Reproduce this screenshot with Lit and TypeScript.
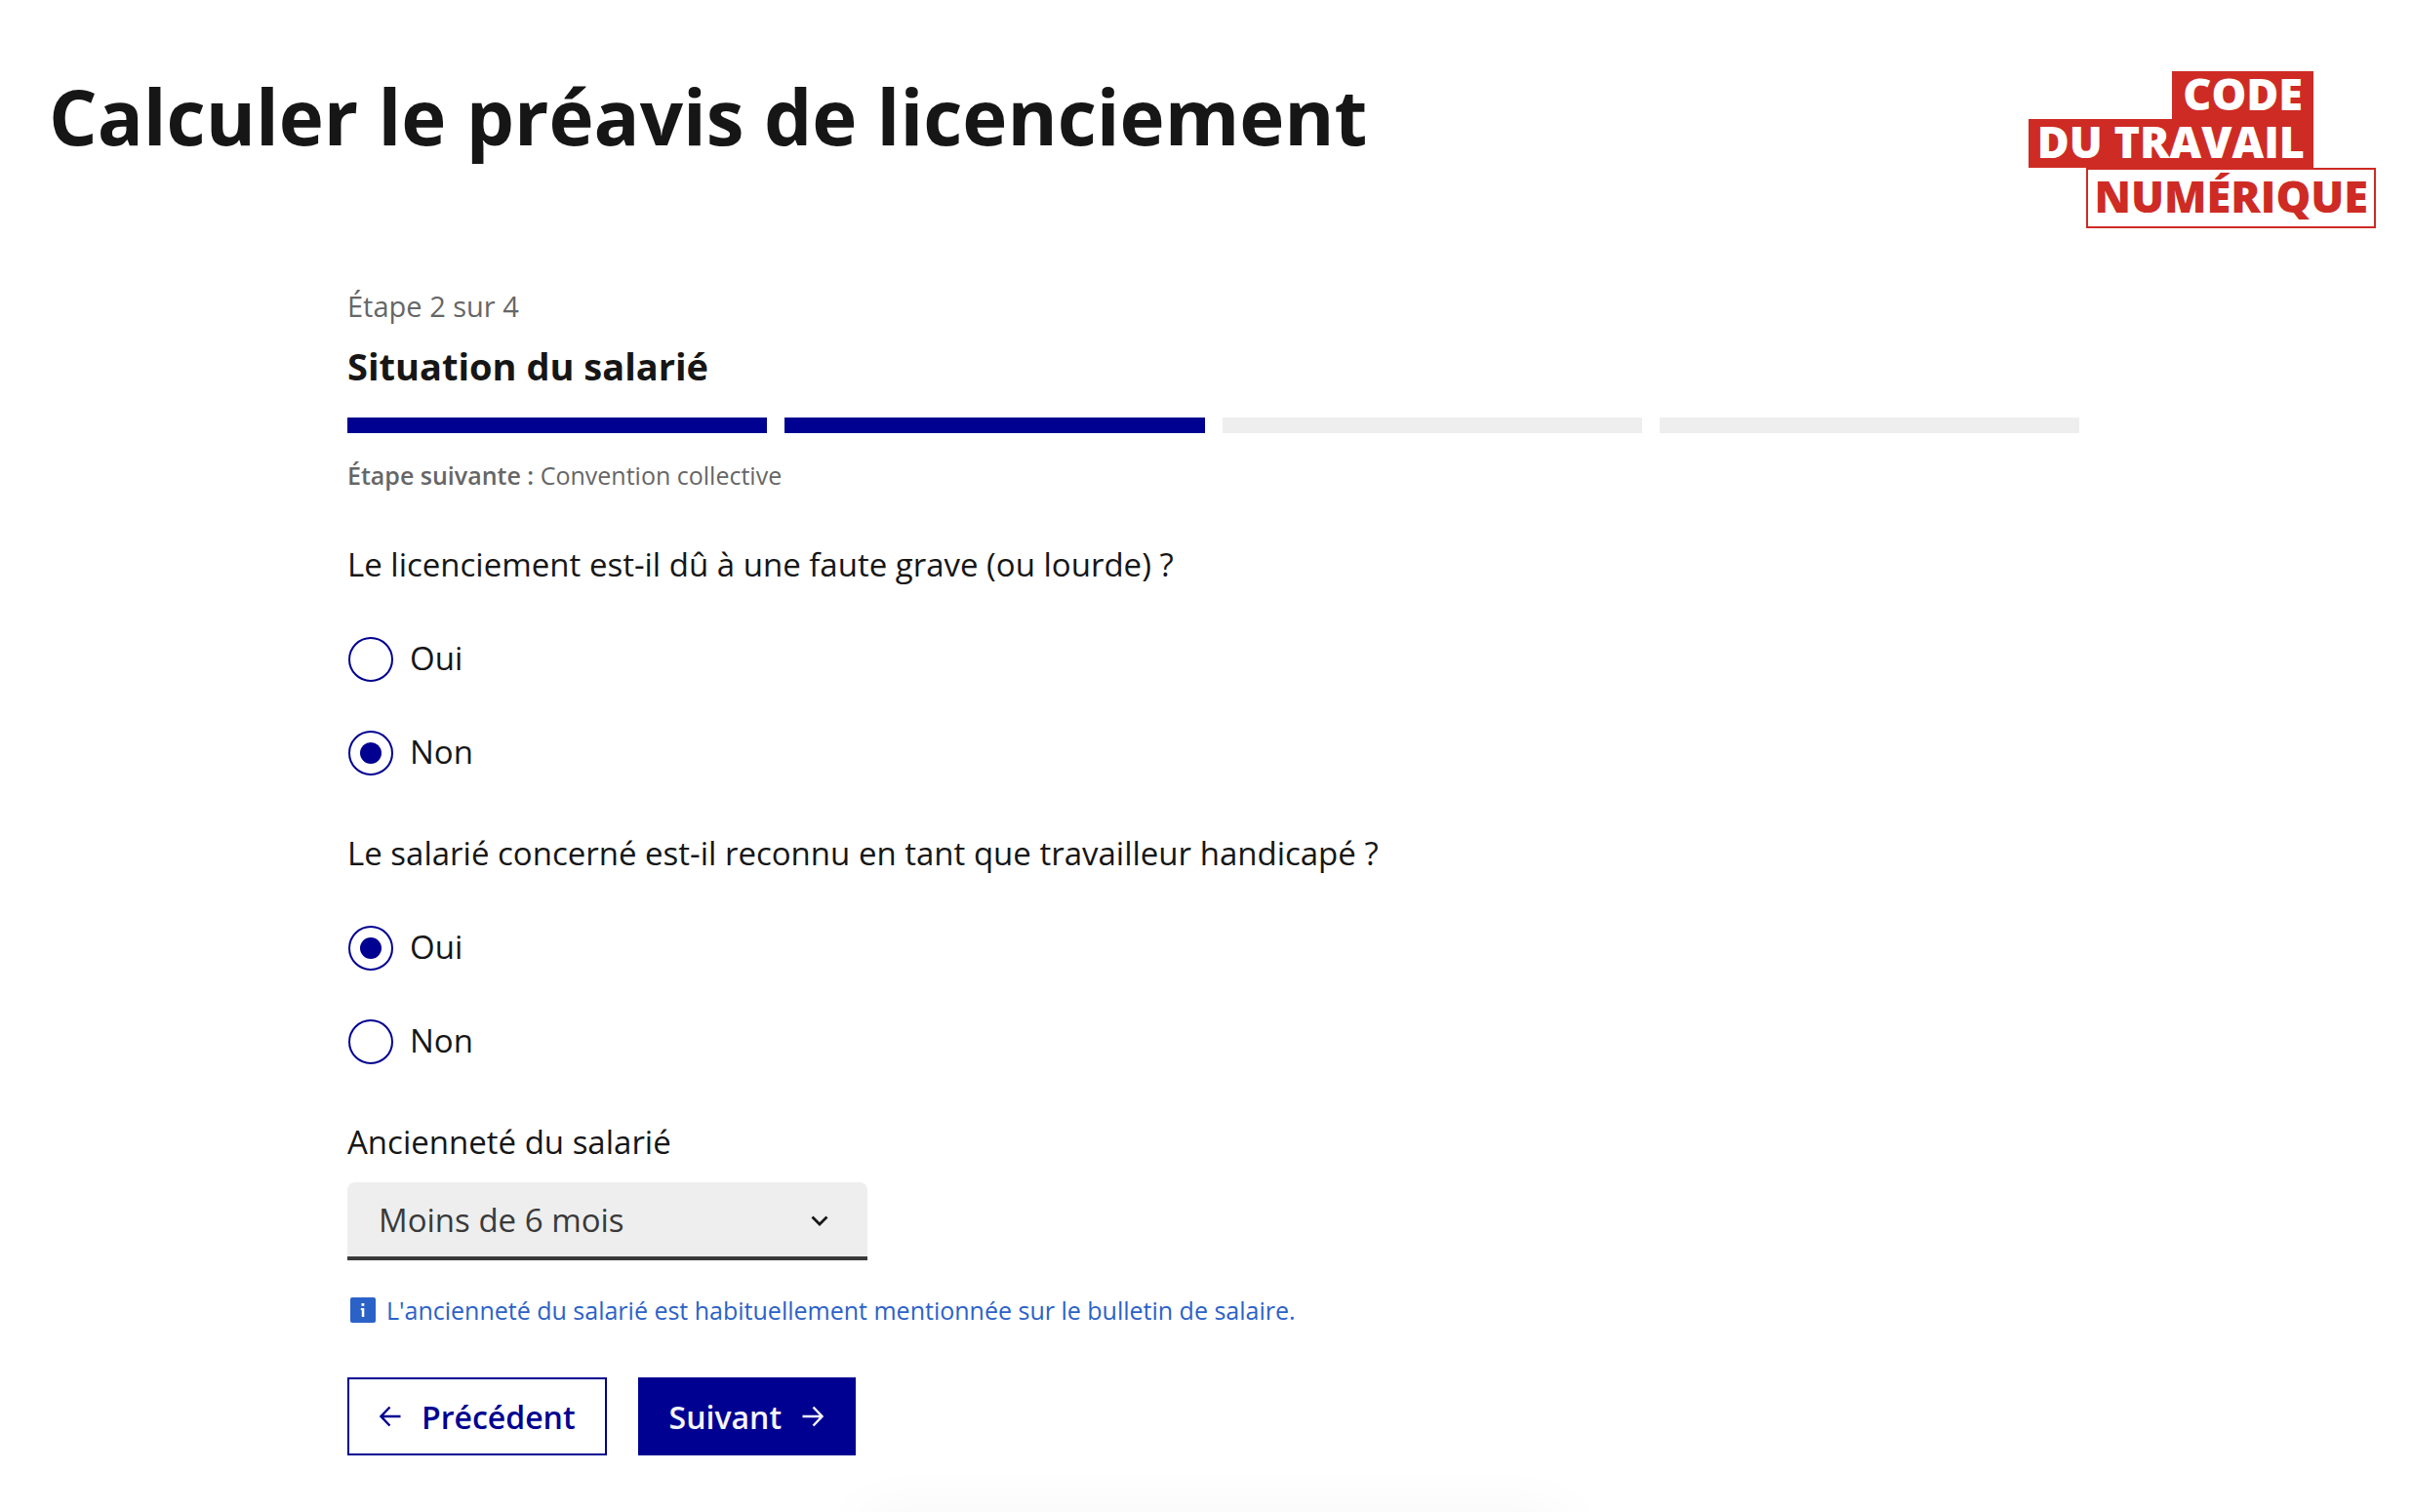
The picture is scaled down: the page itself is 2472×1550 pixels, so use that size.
import { LitElement, html, css, svg } from "lit";
import { customElement, property, state } from "lit/decorators.js";
import { classMap } from "lit/directives/class-map.js";

const arrowLeft = svg`<path d="M22.5 12H2.5M11.5 2.5L2.5 12L11.5 21.5" fill="none" stroke="currentColor" stroke-width="2.5"/>`;
const arrowRight = svg`<path d="M1.5 12H21.5M12.5 2.5L21.5 12L12.5 21.5" fill="none" stroke="currentColor" stroke-width="2.5"/>`;

@customElement("brand-logo")
export class BrandLogo extends LitElement {
  static styles = css`
    :host {
      display: flex;
      flex-direction: column;
      align-items: flex-end;
      flex: none;
      font-size: 45px;
      font-weight: 800;
      line-height: 46px;
      white-space: nowrap;
    }
    .solid {
      margin-right: 64px;
      padding: 0 11px 3px;
      background: #ce2b24;
      color: #fff;
    }
    .second {
      padding: 0 9px 4px;
    }
    .outline {
      padding: 0 6px 4px;
      border: 2px solid #ce2b24;
      color: #ce2b24;
      line-height: 54px;
    }
  `;
  render() {
    return html`
      <span class="solid">CODE</span>
      <span class="solid second">DU TRAVAIL</span>
      <span class="outline">NUMÉRIQUE</span>
    `;
  }
}

@customElement("step-indicator")
export class StepIndicator extends LitElement {
  @property({ type: Number }) current = 1;
  @property({ type: Number }) total = 1;
  @property() heading = "";
  @property() next = "";

  static styles = css`
    :host {
      display: block;
    }
    .count,
    .heading,
    .next {
      margin: 0;
    }
    .count {
      color: #666;
      font-size: 29px;
      line-height: 40px;
    }
    .heading {
      margin-top: 13px;
      font-size: 38px;
      font-weight: 700;
      line-height: 56px;
    }
    .bars {
      display: flex;
      gap: 18px;
      margin-top: 25px;
    }
    .bar {
      flex: 1;
      height: 16px;
      background: #eee;
    }
    .done {
      background: #000091;
    }
    .next {
      margin-top: 23px;
      color: #666;
      font-size: 25px;
      line-height: 40px;
    }
    .lead {
      font-weight: 600;
    }
  `;
  render() {
    return html`
      <p class="count">Étape ${this.current} sur ${this.total}</p>
      <h2 class="heading">${this.heading}</h2>
      <div class="bars">
        ${Array.from(
          { length: this.total },
          (_, i) => html`<div class=${classMap({ bar: true, done: i < this.current })}></div>`,
        )}
      </div>
      <p class="next"><b class="lead">Étape suivante :</b> ${this.next}</p>
    `;
  }
}

@customElement("radio-question")
export class RadioQuestion extends LitElement {
  @property() name = "";
  @property() question = "";
  @property() value = "";

  static styles = css`
    :host {
      display: block;
    }
    .group {
      margin: 0;
      padding: 0;
      border: 0;
      min-width: 0;
    }
    .question {
      padding: 0;
      font-size: 33px;
      line-height: 50px;
    }
    .options {
      display: flex;
      flex-direction: column;
      align-items: flex-start;
      gap: 50px;
      padding-top: 49px;
    }
    .option {
      display: flex;
      align-items: flex-start;
      gap: 17px;
      font-size: 33px;
      line-height: 44px;
    }
    .radio {
      appearance: none;
      display: grid;
      place-items: center;
      box-sizing: border-box;
      width: 46px;
      height: 46px;
      margin: 0 0 0 1px;
      border: 2px solid #000091;
      border-radius: 50%;
    }
    .radio:checked::before {
      content: "";
      width: 22px;
      height: 22px;
      border-radius: 50%;
      background: #000091;
    }
  `;
  private pick(v: string) {
    this.value = v;
  }
  render() {
    return html`
      <fieldset class="group">
        <legend class="question">${this.question}</legend>
        <div class="options">
          ${["Oui", "Non"].map(
            (v) => html`
              <label class="option">
                <input
                  class="radio"
                  type="radio"
                  name=${this.name}
                  .value=${v}
                  .checked=${this.value === v}
                  @change=${() => this.pick(v)}
                />
                <span>${v}</span>
              </label>
            `,
          )}
        </div>
      </fieldset>
    `;
  }
}

@customElement("app-root")
export class AppRoot extends LitElement {
  @state() private seniority = "Moins de 6 mois";

  static styles = css`
    :host {
      display: block;
      min-height: 100vh;
      background: #fff;
      color: #161616;
      font-family: "Open Sans", "Noto Sans", sans-serif;
    }
    .header {
      display: flex;
      align-items: flex-start;
      justify-content: space-between;
      padding: 73px 37px 0 50px;
    }
    .title {
      margin: 0;
      font-size: 78px;
      font-weight: 700;
      line-height: 92px;
    }
    .main {
      padding: 60px 341px 0 356px;
    }
    .first {
      margin-top: 47px;
    }
    .block {
      margin-top: 55px;
    }
    .label {
      display: block;
      font-size: 33px;
      line-height: 50px;
    }
    .picker {
      display: grid;
      align-items: center;
      width: 30%;
      margin-top: 16px;
    }
    .select,
    .chevron {
      grid-area: 1 / 1;
    }
    .select {
      appearance: none;
      width: 100%;
      height: 80px;
      padding: 0 80px 0 32px;
      border: 0;
      border-bottom: 4px solid #3a3a3a;
      border-radius: 8px 8px 0 0;
      background: #eee;
      color: #3a3a3a;
      font: inherit;
      font-size: 33px;
    }
    .chevron {
      justify-self: end;
      width: 18px;
      height: 12px;
      margin-right: 40px;
      pointer-events: none;
    }
    .hint {
      display: flex;
      align-items: center;
      gap: 11px;
      margin: 33px 0 0;
      padding-left: 3px;
      color: #2b62c8;
      font-size: 25px;
      line-height: 36px;
    }
    .info {
      flex: none;
      width: 26px;
      height: 26px;
    }
    .actions {
      display: flex;
      gap: 32px;
      margin-top: 51px;
    }
    .button {
      display: flex;
      align-items: center;
      gap: 20px;
      height: 80px;
      padding: 0 30px;
      border: 2px solid #000091;
      background: #fff;
      color: #000091;
      font: inherit;
      font-size: 32px;
      font-weight: 600;
    }
    .primary {
      background: #000091;
      color: #f5f5fe;
    }
    .arrow {
      width: 24px;
      height: 24px;
    }
    .fade {
      display: flex;
      justify-content: center;
      overflow: hidden;
      height: 58px;
    }
    .glow {
      width: 41%;
      height: 60px;
      margin-top: 58px;
      border-radius: 20px;
      box-shadow: 0 0 60px rgba(0, 0, 0, 0.04);
    }
  `;

  private onSelect(e: Event) {
    this.seniority = (e.target as HTMLSelectElement).value;
  }

  render() {
    return html`
      <header class="header">
        <h1 class="title">Calculer le préavis de licenciement</h1>
        <brand-logo></brand-logo>
      </header>
      <main class="main">
        <step-indicator
          current="2"
          total="4"
          heading="Situation du salarié"
          next="Convention collective"
        ></step-indicator>
        <radio-question
          class="first"
          name="faute"
          question="Le licenciement est-il dû à une faute grave (ou lourde) ?"
          value="Non"
        ></radio-question>
        <radio-question
          class="block"
          name="handicap"
          question="Le salarié concerné est-il reconnu en tant que travailleur handicapé ?"
          value="Oui"
        ></radio-question>
        <div class="block">
          <label class="label" for="seniority">Ancienneté du salarié</label>
          <div class="picker">
            <select class="select" id="seniority" .value=${this.seniority} @change=${this.onSelect}>
              <option>Moins de 6 mois</option>
            </select>
            <svg class="chevron" viewBox="0 0 18 12" aria-hidden="true">
              <path d="M1.5 1.5L9 9L16.5 1.5" fill="none" stroke="#161616" stroke-width="2.8" />
            </svg>
          </div>
        </div>
        <p class="hint">
          <svg class="info" viewBox="0 0 26 26" aria-hidden="true">
            <rect width="26" height="26" rx="2" fill="#2b62c8" />
            <rect x="11.5" y="6" width="2.8" height="2.8" fill="#fff" />
            <path d="M10.8 11H14.3V20H11.8V13H10.8Z" fill="#fff" />
          </svg>
          <span>L'ancienneté du salarié est habituellement mentionnée sur le bulletin de salaire.</span>
        </p>
        <div class="actions">
          <button class="button" type="button">
            <svg class="arrow" viewBox="0 0 24 24" aria-hidden="true">${arrowLeft}</svg>
            Précédent
          </button>
          <button class="button primary" type="button">
            Suivant
            <svg class="arrow" viewBox="0 0 24 24" aria-hidden="true">${arrowRight}</svg>
          </button>
        </div>
        <div class="fade"><div class="glow"></div></div>
      </main>
    `;
  }
}
